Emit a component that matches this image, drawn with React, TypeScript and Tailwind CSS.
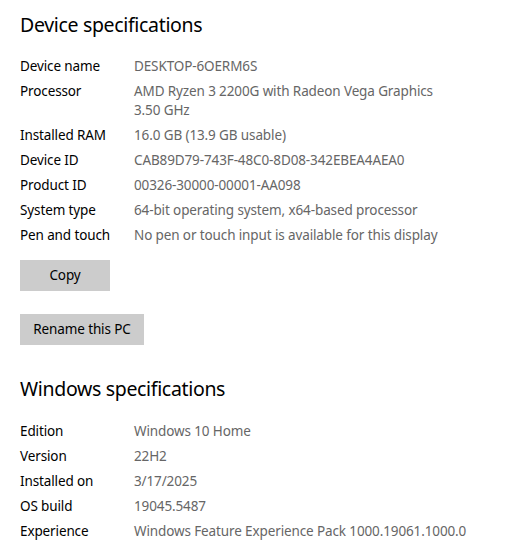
const deviceSpecs: [string, string[]][] = [
  ['Device name', ['DESKTOP-6OERM6S']],
  ['Processor', ['AMD Ryzen 3 2200G with Radeon Vega Graphics', '3.50 GHz']],
  ['Installed RAM', ['16.0 GB (13.9 GB usable)']],
  ['Device ID', ['CAB89D79-743F-48C0-8D08-342EBEA4AEA0']],
  ['Product ID', ['00326-30000-00001-AA098']],
  ['System type', ['64-bit operating system, x64-based processor']],
  ['Pen and touch', ['No pen or touch input is available for this display']],
];

const windowsSpecs: [string, string[]][] = [
  ['Edition', ['Windows 10 Home']],
  ['Version', ['22H2']],
  ['Installed on', ['3/17/2025']],
  ['OS build', ['19045.5487']],
  ['Experience', ['Windows Feature Experience Pack 1000.19061.1000.0']],
];

const SpecList = ({ rows, className }: { rows: [string, string[]][]; className: string }) => (
  <div className={`flex flex-col gap-[6px] ${className}`}>
    {rows.map(([label, lines]) => (
      <div key={label} className="flex text-[13.5px] leading-[19px] tracking-[-0.12px]">
        <div className="w-[114px] shrink-0 text-black">{label}</div>
        <div className="text-[#666666]">
          {lines.map((l) => (
            <div key={l}>{l}</div>
          ))}
        </div>
      </div>
    ))}
  </div>
);

export default function App() {
  return (
    <div className="w-[511px] h-[546px] overflow-hidden bg-white pl-5 pt-[11px] font-['Segoe_UI','Noto_Sans',sans-serif]">
      <h2 className="text-[19.5px] leading-[28px] tracking-[-0.33px] text-black">Device specifications</h2>
      <SpecList rows={deviceSpecs} className="mt-[18px]" />

      <button className="mt-[15px] block w-[90px] h-[31px] bg-[#cccccc] text-[13.5px] tracking-[-0.12px] text-black">Copy</button>
      <button className="mt-[23px] block w-[124px] h-[31px] bg-[#cccccc] text-[13.5px] tracking-[-0.12px] text-black">Rename this PC</button>

      <h2 className="mt-[30px] text-[19.5px] leading-[28px] tracking-[-0.33px] text-black">Windows specifications</h2>
      <SpecList rows={windowsSpecs} className="mt-[19px]" />
    </div>
  );
}
